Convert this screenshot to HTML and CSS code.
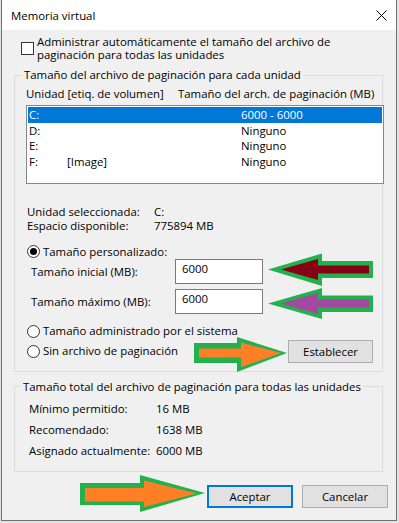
FILE: index.html
```html
<!DOCTYPE html>
<html lang="es">
<head>
  <meta charset="UTF-8">
  <title>Memoria virtual</title>
  <link rel="stylesheet" href="styles.css">
</head>
<body>
  <div class="window">
    <div class="titlebar">
      <span class="title">Memoria virtual</span>
      <svg class="close" width="11" height="11" viewBox="0 0 11 11">
        <path d="M0.5 0.5 L10.5 10.5 M10.5 0.5 L0.5 10.5" stroke="#000" stroke-width="1" fill="none"/>
      </svg>
    </div>

    <div class="dialog">
      <div class="check-row">
        <span class="checkbox"></span>
        <span class="check-text">Administrar automáticamente el tamaño del archivo de<br>paginación para todas las unidades</span>
      </div>

      <fieldset class="group drives">
        <legend>Tamaño del archivo de paginación para cada unidad</legend>
        <div class="list-head">
          <span class="head-drive">Unidad [etiq. de volumen]</span>
          <span>Tamaño del arch. de paginación (MB)</span>
        </div>
        <div class="listbox">
          <div class="row selected"><span>C:</span><span></span><span>6000 - 6000</span></div>
          <div class="row"><span>D:</span><span></span><span>Ninguno</span></div>
          <div class="row"><span>E:</span><span></span><span>Ninguno</span></div>
          <div class="row"><span>F:</span><span>[Image]</span><span>Ninguno</span></div>
        </div>

        <div class="info">
          <span>Unidad seleccionada:</span><span>C:</span>
          <span>Espacio disponible:</span><span>775894 MB</span>
        </div>

        <div class="radio-row first">
          <span class="radio checked"></span>
          <span>Tamaño personalizado:</span>
        </div>
        <div class="size-row">
          <span class="size-label">Tamaño inicial (MB):</span>
          <span class="textbox">6000</span>
        </div>
        <div class="size-row">
          <span class="size-label">Tamaño máximo (MB):</span>
          <span class="textbox">6000</span>
        </div>
        <div class="radio-row system">
          <span class="radio"></span>
          <span>Tamaño administrado por el sistema</span>
        </div>
        <div class="set-row">
          <div class="radio-row">
            <span class="radio"></span>
            <span>Sin archivo de paginación</span>
          </div>
          <button class="btn set-btn">Establecer</button>
        </div>
      </fieldset>

      <fieldset class="group totals">
        <legend>Tamaño total del archivo de paginación para todas las unidades</legend>
        <div class="totals-grid">
          <span>Mínimo permitido:</span><span>16 MB</span>
          <span>Recomendado:</span><span>1638 MB</span>
          <span>Asignado actualmente:</span><span>6000 MB</span>
        </div>
      </fieldset>

      <div class="actions">
        <button class="btn default-btn">Aceptar</button>
        <button class="btn">Cancelar</button>
      </div>
    </div>
  </div>

  <!-- annotation arrows drawn over the dialog -->
  <svg class="arrows" width="399" height="523" viewBox="0 0 399 523">
    <polygon points="268,269.5 322,253.5 322,261 373,261 373,278 322,278 322,286" fill="#22b14c"/>
    <polygon points="281,269.5 318,259 318,265.5 369,265.5 369,273.5 318,273.5 318,280" fill="#880015"/>

    <polygon points="268,303.5 322,288 322,295.5 373,295.5 373,312 322,312 322,319" fill="#22b14c"/>
    <polygon points="281,303.5 318,293 318,299.5 369,299.5 369,307.5 318,307.5 318,314" fill="#a349a4"/>

    <polygon points="194,343 237,343 237,337 287,353 237,372 237,363 194,363" fill="#22b14c"/>
    <polygon points="199,348.5 241,348.5 241,342.5 281,353 241,367 241,357.5 199,357.5" fill="#ff7f27"/>

    <polygon points="80,483 140,483 140,475 205,493 140,512 140,505 80,505" fill="#22b14c"/>
    <polygon points="85,488 144,488 144,480.5 197,493.5 144,507 144,501.5 85,501.5" fill="#ff7f27"/>
  </svg>
</body>
</html>
```

FILE: styles.css
```css
body {
  margin: 0;
  background: #e3e3e3;
  font-family: "Open Sans", "Noto Sans", sans-serif;
  font-size: 11.4px;
  color: #000;
}
.window {
  margin-left: 1px;
  width: 396px;
  height: 521px;
  box-sizing: border-box;
  border: 1px solid #707070;
  border-top: none;
  background: #f0f0f0;
}
.titlebar {
  height: 30px;
  background: #fff;
  display: flex;
  align-items: center;
  justify-content: space-between;
  padding: 0 9px 0 9px;
}
.close {
  display: block;
}
.dialog {
  padding: 4.5px 0 0 12px;
}
.check-row {
  display: flex;
  align-items: center;
  gap: 3px;
  margin-left: 7px;
}
.checkbox {
  width: 13px;
  height: 13px;
  box-sizing: border-box;
  border: 1px solid #333;
  background: #fff;
}
.check-text {
  line-height: 13.5px;
}
.group {
  width: 369px;
  min-width: 0;
  box-sizing: border-box;
  margin: 6.5px 0 0;
  border: 1px solid #dcdcdc;
}
.group legend {
  line-height: 14px;
  padding: 0 2px;
  white-space: nowrap;
}
.drives {
  padding: 5px 9px 8px 11px;
}
.drives legend {
  margin-left: -4px;
}
.list-head {
  display: flex;
  line-height: 14px;
  white-space: nowrap;
}
.head-drive {
  flex: none;
  width: 152px;
}
.listbox {
  margin-top: 4px;
  width: 358px;
  height: 79px;
  box-sizing: border-box;
  border: 1px solid #828790;
  background: #fff;
  padding: 1px;
}
.row {
  display: grid;
  grid-template-columns: 38px 174px 1fr;
  height: 15.5px;
  line-height: 15.5px;
  padding-left: 1px;
}
.row.selected {
  background: #0078d7;
  color: #fff;
}
.info {
  display: grid;
  grid-template-columns: 127px 1fr;
  line-height: 14.5px;
  margin: 20.5px 0 0 1px;
}
.radio-row {
  display: flex;
  align-items: center;
  gap: 3px;
  line-height: 14px;
  margin-left: 1px;
  white-space: nowrap;
}
.radio-row.first {
  margin-top: 11px;
}
.radio-row.system {
  margin-top: 10.5px;
}
.radio {
  flex: none;
  width: 13px;
  height: 13px;
  box-sizing: border-box;
  border: 1px solid #333;
  border-radius: 50%;
  background: #fff;
  display: flex;
  align-items: center;
  justify-content: center;
}
.radio.checked::after {
  content: "";
  width: 7px;
  height: 7px;
  border-radius: 50%;
  background: #000;
}
.size-row {
  display: flex;
  align-items: center;
  height: 25px;
  margin-left: 5px;
  margin-bottom: 5px;
}
.size-row:last-of-type {
  margin-bottom: 0;
}
.size-label {
  width: 144px;
}
.textbox {
  width: 88px;
  height: 25px;
  box-sizing: border-box;
  border: 1px solid #7a7a7a;
  background: #fff;
  padding: 2px 6px;
  line-height: 14px;
}
.set-row {
  display: flex;
  align-items: center;
  justify-content: space-between;
  margin-top: 1.5px;
}
.btn {
  font: inherit;
  color: #000;
  width: 86px;
  height: 23px;
  box-sizing: border-box;
  background: #e1e1e1;
  border: 1px solid #adadad;
  padding: 0;
}
.set-btn {
  width: 85px;
}
.default-btn {
  border: 2px solid #0078d7;
}
.totals {
  margin-top: 8px;
  padding: 4px 9px 10px 14px;
}
.totals legend {
  margin-left: -8px;
}
.totals-grid {
  display: grid;
  grid-template-columns: 127px 1fr;
  line-height: 21px;
}
.actions {
  display: flex;
  justify-content: flex-end;
  gap: 9px;
  margin: 13px 8px 0 0;
}
.arrows {
  position: absolute;
  top: 0;
  left: 0;
  pointer-events: none;
}
```
